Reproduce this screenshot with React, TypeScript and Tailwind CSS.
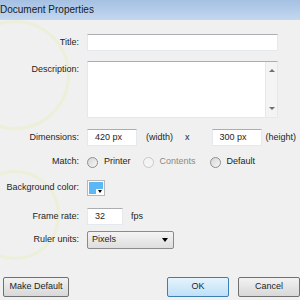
import React from "react";

const Radio = ({ disabled }: { disabled?: boolean }) => (
  <span
    className={`inline-block w-[11px] h-[11px] rounded-full border ${
      disabled ? "border-[#c8c8c8] bg-[#f4f4f4]" : "border-[#8e8f8f] bg-gradient-to-br from-[#d6d6d6] to-[#f6f6f6]"
    }`}
  />
);

const Field = ({ w, value }: { w: string; value: string }) => (
  <div
    className={`${w} h-[17px] bg-white border border-[#e3e9ef] border-t-[#abadb3] flex items-center pl-[7px]`}
  >
    {value}
  </div>
);

const Row = ({ label, children, className = "" }: { label: string; children?: React.ReactNode; className?: string }) => (
  <div className={`flex items-center ${className}`}>
    <div className="w-[79px] text-right shrink-0 whitespace-nowrap">{label}</div>
    <div className="ml-[8px] flex items-center">{children}</div>
  </div>
);

export default function App() {
  return (
    <div
      className="relative w-[300px] h-[300px] overflow-hidden bg-[#f0f0f0] text-[9px] text-[#1e1e1e]"
      style={{ fontFamily: '"Liberation Sans", Arial, sans-serif' }}
    >
      <div className="h-[20px] bg-gradient-to-b from-[#a4c0e3] to-[#c4d8ef] flex items-center text-[10px] text-[#1a1a1a] pb-[1px]">
        Document Properties
      </div>

      {/* faint watermark rings */}
      <div className="pointer-events-none absolute -left-[40px] top-[20px] w-[110px] h-[110px] rounded-full border-[3px] border-[#e9f0c8] opacity-60" />
      <div className="pointer-events-none absolute -left-[30px] top-[170px] w-[90px] h-[90px] rounded-full border-[3px] border-[#e9f0c8] opacity-60" />

      <div className="relative flex flex-col pt-[14px]">
        <Row label="Title:">
          <div className="w-[191px] h-[17px] bg-white border border-[#e3e9ef] border-t-[#abadb3]" />
        </Row>

        <div className="flex mt-[10px]">
          <div className="w-[79px] text-right pt-[2px]">Description:</div>
          <div className="ml-[8px] w-[191px] h-[57px] bg-white border border-[#e3e9ef] border-t-[#abadb3] flex justify-end">
            <div className="w-[12px] h-full bg-[#f4f4f4] border-l border-[#e8e8e8] flex flex-col items-center justify-between py-[7px]">
              <span className="w-0 h-0 border-l-[3px] border-r-[3px] border-b-[3px] border-l-transparent border-r-transparent border-b-[#707070]" />
              <span className="w-0 h-0 border-l-[3px] border-r-[3px] border-t-[3px] border-l-transparent border-r-transparent border-t-[#707070]" />
            </div>
          </div>
        </div>

        <Row label="Dimensions:" className="mt-[11px]">
          <Field w="w-[50px]" value="420 px" />
          <span className="ml-[9px]">(width)</span>
          <span className="ml-[12px]">x</span>
          <div className="ml-[22px]">
            <Field w="w-[50px]" value="300 px" />
          </div>
          <span className="ml-[4px]">(height)</span>
        </Row>

        <Row label="Match:" className="mt-[8px] h-[16px]">
          <Radio />
          <span className="ml-[6px]">Printer</span>
          <span className="ml-[12px] flex items-center">
            <Radio disabled />
          </span>
          <span className="ml-[6px] text-[#8a8a8a]">Contents</span>
          <span className="ml-[14px] flex items-center">
            <Radio />
          </span>
          <span className="ml-[6px]">Default</span>
        </Row>

        <Row label="Background color:" className="mt-[10px]">
          <div className="relative w-[18px] h-[16px] border border-[#b8b8b8] bg-white p-[1px]">
            <div className="w-full h-full bg-[#5cb8f5]" />
            <div className="absolute right-[1px] bottom-[1px] w-[7px] h-[5px] bg-white flex items-center justify-center">
              <span className="w-0 h-0 border-l-[2px] border-r-[2px] border-t-[3px] border-l-transparent border-r-transparent border-t-black" />
            </div>
          </div>
        </Row>

        <Row label="Frame rate:" className="mt-[12px]">
          <Field w="w-[36px]" value="32" />
          <span className="ml-[8px]">fps</span>
        </Row>

        <Row label="Ruler units:" className="mt-[6px]">
          <div className="w-[87px] h-[18px] border border-[#8a8a8a] rounded-[2px] bg-gradient-to-b from-[#f4f4f4] to-[#dedede] flex items-center justify-between pl-[4px] pr-[5px]">
            <span>Pixels</span>
            <span className="w-0 h-0 border-l-[3px] border-r-[3px] border-t-[4px] border-l-transparent border-r-transparent border-t-black" />
          </div>
        </Row>

        <div className="flex items-center mt-[28px] pl-[3px]">
          <button className="w-[66px] h-[20px] border border-[#707070] rounded-[2px] bg-gradient-to-b from-[#f2f2f2] to-[#d8d8d8] text-[9px]">
            Make Default
          </button>
          <button className="ml-auto w-[62px] h-[20px] border border-[#3c7fb1] rounded-[2px] bg-gradient-to-b from-[#e6f3fc] to-[#bfe0f8] text-[9px]">
            OK
          </button>
          <button className="ml-[9px] w-[62px] h-[20px] border border-[#707070] rounded-[2px] bg-gradient-to-b from-[#f2f2f2] to-[#d8d8d8] text-[9px]">
            Cancel
          </button>
        </div>
      </div>
    </div>
  );
}
